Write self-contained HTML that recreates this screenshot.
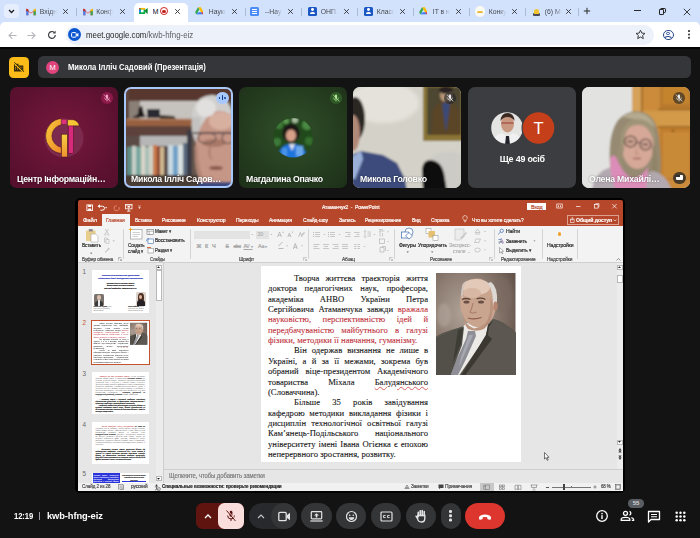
<!DOCTYPE html>
<html><head><meta charset="utf-8">
<style>
*{box-sizing:border-box;margin:0;padding:0}
html,body{width:700px;height:538px;overflow:hidden;background:#131314;font-family:"Liberation Sans",sans-serif}
body{position:relative}
.a{position:absolute;white-space:nowrap}
.tab{position:absolute;top:0;height:22px;width:56px;font-size:6.800px;color:#45484d;line-height:23.400px;white-space:nowrap}
.tab .t{position:absolute;left:18.800px;top:0;width:17px;overflow:hidden;-webkit-mask-image:linear-gradient(90deg,#000 60%,transparent)}
.tab .x{position:absolute;left:41px;top:7.5px;width:7px;height:7px}
.tab .sep{position:absolute;right:0.500px;top:7.500px;width:1px;height:8px;background:#adbad3}
.fav{position:absolute;left:5px;top:6px;width:10px;height:10px}
.tile{position:absolute;top:87px;width:108px;height:101.200px;border-radius:7px;overflow:hidden}
.tile>svg:first-child{position:absolute;left:0;top:0}
.name{position:absolute;left:6.500px;top:85.500px;font-size:9px;line-height:12px;color:#fff;font-weight:bold;white-space:nowrap;letter-spacing:-0.25px;text-shadow:0 0 2px rgba(0,0,0,.5)}
.mic{position:absolute;right:5.300px;top:5.100px;width:11.600px;height:11.600px;border-radius:50%;background:rgba(32,33,36,.6)}
.btn{position:absolute;top:503px;height:26px;background:#333537;border-radius:13px}
.pt{position:absolute;white-space:nowrap;font-size:5.3px;line-height:7px;color:#262626;letter-spacing:-0.1px;-webkit-text-stroke:0.18px currentColor}
.rt{position:absolute;white-space:nowrap;font-size:5.3px;line-height:7px;color:#fff;letter-spacing:-0.1px;-webkit-text-stroke:0.18px #fff}
.vs{position:absolute;top:229px;width:1px;height:30px;background:#d4d4d4}
.sx{display:inline-block;transform:scaleX(var(--k,1));transform-origin:0 0}
.tt{position:absolute;font-family:"Liberation Serif",serif;font-size:1.720px;line-height:2.050px;white-space:normal}
.tt b,.tt[style*="bold"]{-webkit-text-stroke:0.100px currentColor}
.j{text-align:justify}
.sl{position:absolute;left:0;top:0;width:260px;height:195px;font-family:"Liberation Serif",serif;font-size:8.650px;line-height:10.380px;color:#141414;-webkit-text-stroke:0.100px currentColor}
.sl .ln{position:relative;left:7px;width:160px;height:10.38px;text-align:justify;text-align-last:justify;white-space:nowrap}
.sl .ln:first-child{margin-top:6.4px}
.sl .in{padding-left:26px}
.sl .la{text-align-last:left}
.rd{color:#c0323c}
.wv{text-decoration:underline wavy #d86060 0.350px;text-underline-offset:0.800px}
.ph{position:absolute;left:175.4px;top:6.6px}
</style></head><body>

<div class="a" style="left:0;top:0;width:700px;height:30px;background:#d3e2fc"></div>
<div class="a" style="left:0;top:22px;width:700px;height:25.300px;background:#fff;border-radius:5px 5px 0 0"></div><div class="a" style="left:0;top:47.300px;width:700px;height:1.700px;background:#050505"></div>
<div class="a" style="left:3.5px;top:4px;width:15.5px;height:14px;border-radius:4px;background:#e6eefd"></div>
<svg class="a" style="left:8px;top:9px" width="7" height="5" viewBox="0 0 7 5"><path d="M1 1 L3.5 3.5 L6 1" fill="none" stroke="#1f1f1f" stroke-width="1.3"/></svg>
<svg width="0" height="0" style="position:absolute"><defs>
<symbol id="gm" viewBox="0 0 10 8"><path d="M0.3 7.3V1.2L5 4.8L9.7 1.2V7.3H7.6V3.6L5 5.6L2.4 3.6V7.3Z" fill="#ea4335"/><rect x="0.3" y="2" width="2.1" height="5.3" fill="#4285f4"/><rect x="7.6" y="2" width="2.1" height="5.3" fill="#34a853"/><path d="M7.6 1.6L9.7 0.4V3L7.6 3.6Z" fill="#fbbc04"/><path d="M0.3 0.4L2.4 1.6V3.6L0.3 3Z" fill="#c5221f"/></symbol>
<symbol id="cx" viewBox="0 0 7 7"><path d="M1.200 1.200L5.800 5.800M5.800 1.200L1.200 5.800" stroke="#33363a" stroke-width="0.950" fill="none"/></symbol>
<symbol id="drv" viewBox="0 0 10 9"><path d="M3.4 0.3H6.6L10 6H6.8Z" fill="#fbbc04"/><path d="M3.4 0.3L0 6L1.6 8.7L5 3Z" fill="#34a853"/><path d="M1.6 8.7H8.4L10 6H3.2Z" fill="#4285f4"/><path d="M6.8 6H10L8.4 8.7Z" fill="#ea4335"/></symbol>
</defs></svg>
<div class="tab" style="left:21px"><svg class="fav" style="top:7.5px;height:8px"><use href="#gm"/></svg><span class="t">Вхідні</span><svg class="x"><use href="#cx"/></svg><div class="sep"></div></div>
<div class="tab" style="left:77.5px"><svg class="fav" style="top:7.5px;height:8px"><use href="#gm"/></svg><span class="t">Конфе</span><svg class="x"><use href="#cx"/></svg></div>
<div class="a" style="left:134px;top:2.5px;width:53.5px;height:20px;background:#fff;border-radius:5px 5px 0 0"></div>
<div class="tab" style="left:133px"><svg class="fav" style="left:6px;top:7.300px;width:8.800px;height:8px" viewBox="0 0 10 9"><rect x="0" y="1" width="7" height="7" rx="1" fill="#00ac47"/><path d="M0 3L2.2 1H0Z" fill="#ea4335"/><rect x="0" y="3" width="2" height="3" fill="#2684fc"/><rect x="2" y="1" width="5" height="2" fill="#ffba00"/><rect x="2.2" y="3" width="3" height="3" fill="#fff"/><path d="M7 3.3L9.8 1.2V7.8L7 5.7Z" fill="#00832d"/></svg><span class="t" style="left:19.600px;width:10px;color:#111;font-size:7.200px;-webkit-mask-image:none">М</span><div class="a" style="left:27.200px;top:7.400px;width:7.800px;height:7.800px;border-radius:50%;border:1px solid #c5221f"></div><div class="a" style="left:29.400px;top:9.600px;width:3.400px;height:3.400px;border-radius:50%;background:#c5221f"></div><svg class="x" style="left:41px"><use href="#cx"/></svg></div>
<div class="tab" style="left:190px"><svg class="fav" style="left:4.600px;top:7.300px;width:8.800px;height:7.800px"><use href="#drv"/></svg><span class="t">Науко</span><svg class="x"><use href="#cx"/></svg><div class="sep"></div></div>
<div class="tab" style="left:246px"><div class="fav" style="left:4px;top:6.500px;width:9px;height:9.400px;border-radius:1.500px;background:#4c8bf5"></div><div class="a" style="left:6px;top:8.700px;width:5px;height:1.100px;background:#fff;box-shadow:0 2px #fff,0 4px #fff"></div><span class="t">--Науко</span><svg class="x"><use href="#cx"/></svg><div class="sep"></div></div>
<div class="tab" style="left:302px"><div class="fav" style="left:5.5px;top:6.5px;width:9.5px;height:9.5px;border-radius:1.5px;background:#1a56c4"></div><div class="a" style="left:8.8px;top:8.3px;width:2.8px;height:2.8px;border-radius:50%;background:#fff"></div><div class="a" style="left:7.6px;top:11.8px;width:5.3px;height:2.5px;border-radius:2px 2px 0 0;background:#fff"></div><span class="t">ОНП..</span><svg class="x"><use href="#cx"/></svg><div class="sep"></div></div>
<div class="tab" style="left:358px"><div class="fav" style="left:5.5px;top:6.5px;width:9.5px;height:9.5px;border-radius:1.5px;background:#1a56c4"></div><div class="a" style="left:8.8px;top:8.3px;width:2.8px;height:2.8px;border-radius:50%;background:#fff"></div><div class="a" style="left:7.6px;top:11.8px;width:5.3px;height:2.5px;border-radius:2px 2px 0 0;background:#fff"></div><span class="t">Класні</span><svg class="x"><use href="#cx"/></svg><div class="sep"></div></div>
<div class="tab" style="left:414px"><svg class="fav" style="left:4.600px;top:7.300px;width:8.800px;height:7.800px"><use href="#drv"/></svg><span class="t">IT в на</span><svg class="x"><use href="#cx"/></svg><div class="sep"></div></div>
<div class="tab" style="left:470px"><div class="fav" style="left:4.5px;top:6px;width:10.5px;height:10.5px;border-radius:50%;background:#fbfaf2"></div><div class="a" style="left:6.5px;top:10.5px;width:6.5px;height:2px;border-radius:2px 2px 0 0;background:#e9b83c"></div><span class="t">Конку</span><svg class="x"><use href="#cx"/></svg><div class="sep"></div></div>
<div class="tab" style="left:526px"><div class="a" style="left:6.5px;top:13px;width:7px;height:2.6px;border-radius:1px;background:#4a4a58"></div><div class="a" style="left:7.5px;top:8.5px;width:5px;height:5px;border-radius:2.5px 2.5px 0 0;background:#f0c430"></div><span class="t">(6) Ме</span><svg class="x" style="left:39px"><use href="#cx"/></svg><div class="sep" style="right:3.500px"></div></div>
<svg class="a" style="left:583px;top:7px" width="8" height="8" viewBox="0 0 8 8"><path d="M4 0.800V7.200M0.800 4H7.200" stroke="#2a2a2a" stroke-width="1"/></svg>
<div class="a" style="left:634px;top:10.300px;width:6.500px;height:0.900px;background:#2a2a2a"></div>
<div class="a" style="left:658.5px;top:9px;width:5.5px;height:5.5px;border:1px solid #1f1f1f;border-radius:1.2px;background:#d3e2fc"></div>
<div class="a" style="left:660px;top:7.5px;width:5.5px;height:5.5px;border:1px solid #1f1f1f;border-radius:1.2px;z-index:-0"></div>
<div class="a" style="left:658.5px;top:9px;width:5.5px;height:5.5px;border:1px solid #1f1f1f;border-radius:1.2px;background:#d3e2fc"></div>
<svg class="a" style="left:683px;top:7.5px" width="8" height="8" viewBox="0 0 8 8"><path d="M0.800 0.800L7.200 7.200M7.200 0.800L0.800 7.200" stroke="#2a2a2a" stroke-width="0.900"/></svg>
<!-- toolbar -->
<svg class="a" style="left:8px;top:30.5px" width="9" height="9" viewBox="0 0 9 9"><path d="M8.5 4.5H1.2M4.3 1.2L1 4.5L4.3 7.8" fill="none" stroke="#b4b6ba" stroke-width="1.1"/></svg>
<svg class="a" style="left:27px;top:30.5px" width="9" height="9" viewBox="0 0 9 9"><path d="M0.5 4.5H7.8M4.7 1.2L8 4.5L4.7 7.8" fill="none" stroke="#b4b6ba" stroke-width="1.1"/></svg>
<svg class="a" style="left:47px;top:30px" width="10" height="10" viewBox="0 0 10 10"><path d="M8.3 5A3.4 3.4 0 1 1 7.3 2.5" fill="none" stroke="#3c4043" stroke-width="1.2"/><path d="M8.6 0.8V3.6H5.8Z" fill="#3c4043"/></svg>
<div class="a" style="left:66px;top:25px;width:587.500px;height:19.500px;border-radius:10px;background:#edf1fa"></div>
<div class="a" style="left:67.5px;top:28.3px;width:13px;height:13px;border-radius:50%;background:#0b57d0"></div>
<svg class="a" style="left:70.5px;top:32px" width="8" height="6" viewBox="0 0 8 6"><rect x="0.6" y="0.6" width="4.6" height="4.6" rx="0.9" fill="none" stroke="#fff" stroke-width="1"/><path d="M5.4 2.2L7.4 1V4.8L5.4 3.6Z" fill="#fff"/></svg>
<div class="a" style="left:85.700px;top:28px;font-size:9.200px;line-height:14px;color:#1f1f1f"><span class="sx" style="--k:0.857" id="urlt">meet.google.com<span style="color:#5e6166">/kwb-hfng-eiz</span></span></div>
<svg class="a" style="left:635px;top:29px" width="11" height="11" viewBox="0 0 11 11"><path d="M5.5 1.2L6.8 4.1L10 4.4L7.6 6.5L8.3 9.6L5.5 8L2.7 9.6L3.4 6.5L1 4.4L4.2 4.1Z" fill="none" stroke="#3c4043" stroke-width="1"/></svg>
<div class="a" style="left:663px;top:29.5px;width:10.5px;height:10.5px;border:1.2px solid #2a4a8c;border-radius:50%;overflow:hidden"><div class="a" style="left:2.3px;top:1.2px;width:3.4px;height:3.4px;border-radius:50%;border:1px solid #2a4a8c"></div><div class="a" style="left:0.2px;top:5.6px;width:7.6px;height:6px;border-radius:50%;border:1px solid #2a4a8c"></div></div>
<div class="a" style="left:688.3px;top:30.3px;width:1.7px;height:1.7px;border-radius:50%;background:#3c4043;box-shadow:0 3.4px #3c4043,0 6.8px #3c4043"></div>

<div class="a" style="left:9.100px;top:56.600px;width:19.500px;height:21.700px;border-radius:4.500px;background:#fbbc1a"></div>
<svg class="a" style="left:13.200px;top:61.800px" width="11.500" height="10.500" viewBox="0 0 11.500 10.500"><path d="M1 1.800H5.500V3.600H10.300V9.500H1Z" fill="#33280c"/><path d="M2 3.500H3M2 5.300H3M2 7.100H3M4 5.300H5M4 7.100H5M6.500 5.300H7.600M6.500 7.100H7.600M8.500 5.300H9.300" stroke="#fbbc1a" stroke-width="0.800"/><path d="M0.500 0.300L10.800 10.300" stroke="#fbbc1a" stroke-width="1.600"/><path d="M1.200 0.300L11.300 10.100" stroke="#33280c" stroke-width="0.900"/></svg>
<div class="a" style="left:37.700px;top:56.300px;width:653px;height:22px;border-radius:5.500px;background:#35363a"></div>
<div class="a" style="left:46px;top:61.100px;width:13.200px;height:13.200px;border-radius:50%;background:#e0447c;color:#fff;font-size:7.500px;text-align:center;line-height:13.400px">M</div>
<div class="a" style="left:68.200px;top:61px;line-height:13px;font-size:9px;font-weight:bold;color:#fff"><span class="sx" style="--k:0.848" id="pres">Микола Ілліч Садовий (Презентація)</span></div>

<svg width="0" height="0" style="position:absolute"><defs>
<filter id="b1" x="-10%" y="-10%" width="120%" height="120%"><feGaussianBlur stdDeviation="0.9"/></filter>
<filter id="b2" x="-10%" y="-10%" width="120%" height="120%"><feGaussianBlur stdDeviation="1.6"/></filter>
<filter id="b3" x="-10%" y="-10%" width="120%" height="120%"><feGaussianBlur stdDeviation="0.5"/></filter>
<symbol id="micoff" viewBox="0 0 12 12"><rect x="4.900" y="2.600" width="2.200" height="4.200" rx="1.100" fill="currentColor"/><path d="M3.600 5.600A2.400 2.400 0 0 0 8.400 5.600M6 8V9.400" fill="none" stroke="currentColor" stroke-width="0.700"/><path d="M3 2.600L9.200 9.400" stroke="currentColor" stroke-width="0.800"/></symbol>
</defs></svg>
<!-- tile1 -->
<div class="tile" style="left:10px;background:radial-gradient(ellipse 75% 75% at 50% 45%,#78193d,#5c1130 70%,#530f2b)">
 <svg width="108" height="102" viewBox="0 0 108 102">
  <defs><linearGradient id="lg1" x1="0" y1="0" x2="1" y2="1"><stop offset="0" stop-color="#f8cc38"/><stop offset="1" stop-color="#f0882c"/></linearGradient><linearGradient id="lg2" x1="0" y1="0" x2="0" y2="1"><stop offset="0" stop-color="#f8d040"/><stop offset="1" stop-color="#f09030"/></linearGradient></defs>
  <circle cx="54.100" cy="51.100" r="19.500" fill="#7c2a4e"/>
  <g filter="url(#b3)">
  <path d="M51.300 31.500A17.600 17.600 0 0 0 51.300 66.500V60.300A11.500 11.500 0 0 1 51.300 37.700Z" fill="url(#lg1)" stroke="#3a0a1c" stroke-width="0.500"/>
  <rect x="51.600" y="32.700" width="4.800" height="4.200" fill="#e0307c"/>
  <rect x="51.400" y="47.200" width="6" height="22.800" fill="url(#lg2)" stroke="#3a0a1c" stroke-width="0.500"/>
  <rect x="58.200" y="37.700" width="5.400" height="29" fill="#d82a7a" stroke="#3a0a1c" stroke-width="0.500"/>
  <path d="M57.600 32.700H63Q68 33.500 69.300 38.800H57.600Z" fill="#f6c634" stroke="#3a0a1c" stroke-width="0.400"/>
  </g>
 </svg>
 <div class="mic" style="background:#8b1a4a"></div><svg class="a" style="right:5.100px;top:4.900px;color:#f4a6c6" width="12" height="12"><use href="#micoff"/></svg>
 <div class="name" id="n1"><span class="sx" style="--k:.97">Центр Інформаційн…</span></div>
</div>
<!-- tile2 -->
<div class="tile" style="left:124.200px;width:108.600px;background:#8a8078">
 <svg width="108" height="102" viewBox="0 0 108 102">
  <g filter="url(#b1)">
  <rect x="-2" y="-2" width="112" height="106" fill="#66564e"/>
  <rect x="-2" y="-2" width="112" height="16" fill="#58382e"/>
  <rect x="5" y="14" width="11" height="18" fill="#8a8078"/>
  <rect x="16" y="14" width="58" height="18" fill="#c6c2be"/>
  <rect x="0" y="0" width="5" height="102" fill="#5e443a"/>
  <path d="M8 31L14 27L15 20L18 19L20 27L22 30Z" fill="#1c1816"/>
  <rect x="23" y="22" width="13" height="9" fill="#2a2a30"/>
  <path d="M36 28L50 29L52 32H36Z" fill="#3a302c"/>
  <rect x="2" y="31.700" width="66" height="2" fill="#b07a5a"/>
  <rect x="2" y="33.500" width="66" height="5.500" fill="#98603f"/>
  <rect x="2" y="39" width="66" height="10" fill="#5c433a"/>
  <rect x="16" y="49" width="50" height="10" fill="#b6b6b6"/>
  <rect x="2" y="49" width="14" height="10" fill="#5a4c46"/>
  <rect x="3" y="60" width="5" height="28" fill="#5e9088"/>
  <rect x="8" y="59" width="4" height="29" fill="#c8d0c8"/>
  <rect x="12" y="60" width="5" height="28" fill="#78a8a0"/>
  <rect x="17" y="59" width="4" height="29" fill="#d8d4c8"/>
  <rect x="21" y="60" width="4" height="28" fill="#a8c0b8"/>
  <rect x="25" y="59" width="4" height="29" fill="#d0d0c4"/>
  <rect x="29" y="58" width="4" height="30" fill="#c87848"/>
  <rect x="33" y="59" width="3" height="29" fill="#8a4030"/>
  <rect x="36" y="60" width="4" height="28" fill="#d0b890"/>
  <rect x="40" y="59" width="4" height="29" fill="#584a48"/>
  <rect x="44" y="58" width="5" height="30" fill="#c8d8e0"/>
  <rect x="49" y="59" width="5" height="29" fill="#70a0c8"/>
  <rect x="54" y="58" width="5" height="30" fill="#d8e0e0"/>
  <rect x="59" y="56" width="4" height="32" fill="#5a6a80"/>
  <rect x="63" y="43" width="5" height="45" fill="#3a3a44"/>
  <rect x="0" y="88" width="76" height="16" fill="#4a3c36"/>
  <ellipse cx="88" cy="28" rx="20" ry="20" fill="#d0cecc"/>
  <path d="M68 30Q66 44 72 56L78 50L76 30Z" fill="#c4c2c0"/>
  <ellipse cx="96" cy="68" rx="25" ry="44" fill="#c69686"/>
  <ellipse cx="97" cy="34" rx="12" ry="9" fill="#d8b0a0"/>
  <ellipse cx="82" cy="21" rx="10" ry="9" fill="#e2e0de"/>
  <ellipse cx="90" cy="56" rx="12" ry="4" fill="#a87868"/>
  <path d="M69 46H108" stroke="#4a4040" stroke-width="1.300"/>
  <ellipse cx="83" cy="51" rx="9" ry="5.500" fill="none" stroke="#5a4a4a" stroke-width="1.100"/>
  <ellipse cx="104" cy="51" rx="6" ry="5.500" fill="none" stroke="#5a4a4a" stroke-width="1.100"/>
  <path d="M86 60Q84 70 88 72" stroke="#a87868" stroke-width="1.500" fill="none"/>
  <ellipse cx="92" cy="81" rx="7" ry="2" fill="#8a5850"/>
  <path d="M72 60Q72 84 82 100" stroke="#b08474" stroke-width="3" fill="none"/>
  <path d="M72 104L76 95L108 95V104Z" fill="#3a4a80"/>
  </g>
 </svg>
 <div class="a" style="left:0;top:0;width:108.600px;height:101.200px;border:2px solid #a8c7fa;border-radius:7px"></div>
 <div class="a" style="right:4px;top:4.5px;width:12.5px;height:12.5px;border-radius:50%;background:#a8c7fa"></div>
 <div class="a" style="right:9.5px;top:8.3px;width:1.6px;height:5px;border-radius:1px;background:#0b3a8c"></div>
 <div class="a" style="right:12.3px;top:9.6px;width:1.5px;height:2.4px;border-radius:1px;background:#0b3a8c"></div>
 <div class="a" style="right:6.8px;top:9.6px;width:1.5px;height:2.4px;border-radius:1px;background:#0b3a8c"></div>
 <div class="name" id="n2"><span class="sx" style="--k:.97">Микола Ілліч Садов…</span></div>
</div>
<!-- tile3 -->
<div class="tile" style="left:239px;background:radial-gradient(ellipse 80% 80% at 50% 45%,#30502a,#23391d 65%,#1b2d17)">
 <svg width="108" height="102" viewBox="0 0 108 102">
  <defs><clipPath id="c3"><circle cx="54.3" cy="50.8" r="19.8"/></clipPath></defs>
  <g clip-path="url(#c3)"><g filter="url(#b1)">
   <rect x="30" y="28" width="50" height="46" fill="#24481f"/>
   <circle cx="40" cy="38" r="4" fill="#3e7a38"/><circle cx="68" cy="38" r="5" fill="#4a8a42"/><circle cx="70" cy="54" r="4" fill="#34702f"/><circle cx="38" cy="55" r="4" fill="#3e7a3a"/><circle cx="56" cy="33" r="3" fill="#a8c0a0"/><circle cx="47" cy="34" r="3" fill="#5a9a50"/>
   <ellipse cx="52" cy="46" rx="8.500" ry="9.500" fill="#1c1416"/>
   <ellipse cx="52" cy="48.500" rx="5" ry="6" fill="#d8a088"/>
   <path d="M39 72C40 60 46 57 53 57S66 60 69 72Z" fill="#1a74dc"/>
   <path d="M50 57L53 64L56 57Z" fill="#e0e4f0"/>
   <rect x="57" y="59" width="7" height="10" fill="#6aa8ec"/><rect x="43" y="61" width="5" height="8" fill="#4a94e8"/>
  </g></g>
 </svg>
 <div class="mic" style="background:#2f5a26"></div><svg class="a" style="right:5.100px;top:4.900px;color:#b4e89a" width="12" height="12"><use href="#micoff"/></svg>
 <div class="name" id="n3"><span class="sx" style="--k:.97">Магдалина Опачко</span></div>
</div>
<!-- tile4 -->
<div class="tile" style="left:353px;background:#d6d4ca">
 <svg width="108" height="102" viewBox="0 0 108 102">
  <g filter="url(#b1)">
  <rect x="-2" y="-2" width="112" height="106" fill="#d4d2c8"/>
  <g filter="url(#b2)"><ellipse cx="30" cy="16" rx="36" ry="20" fill="#e4e2da"/>
  <ellipse cx="96" cy="86" rx="26" ry="22" fill="#cccbc6"/></g>
  <rect x="70" y="-2" width="40" height="56" fill="#8a7434"/>
  <rect x="74" y="0" width="34" height="48" fill="#4e4632"/>
  <ellipse cx="93" cy="8" rx="6" ry="7" fill="#b89878"/>
  <ellipse cx="93" cy="3" rx="7" ry="4" fill="#2a2420"/>
  <path d="M78 48L80 22L88 14L98 14L106 22L108 48Z" fill="#5a4428"/>
  <path d="M89 16L93 46L97 16Z" fill="#3a4a78"/>
  <ellipse cx="2" cy="32" rx="10" ry="22" fill="#2c2622"/>
  <ellipse cx="0" cy="46" rx="7" ry="18" fill="#b08878"/>
  <path d="M-2 68L8 64L30 68L44 76L52 92L54 104L-2 104Z" fill="#3c4c7c"/>
  <path d="M-2 70L8 64L10 72L2 92L-2 92Z" fill="#9ab0d8"/>
  <path d="M70 104L69 82Q70 73 78 73Q88 74 91 86L94 104Z" fill="#101010"/>
  </g>
 </svg>
 <div class="mic"></div><svg class="a" style="right:5.100px;top:4.900px;color:#e8eaed" width="12" height="12"><use href="#micoff"/></svg>
 <div class="name" id="n4"><span class="sx" style="--k:.97">Микола Головко</span></div>
</div>
<!-- tile5 -->
<div class="tile" style="left:468px;background:#3c3d40">
 <svg width="108" height="102" viewBox="0 0 108 102">
  <defs><clipPath id="c5"><circle cx="39" cy="41" r="15.8"/></clipPath></defs>
  <g clip-path="url(#c5)"><g filter="url(#b3)">
   <rect x="20" y="22" width="40" height="40" fill="#e4e4e2"/>
   <ellipse cx="39.5" cy="37" rx="6.5" ry="8.5" fill="#c89880"/>
   <path d="M32.5 34Q33 26 39.5 26Q46 26 46.500 34Q44 30 39.5 30Q35 30 32.5 34Z" fill="#3a2a24"/>
   <path d="M33.500 36H45.500" stroke="#b06858" stroke-width="2"/>
   <path d="M24 58Q26 47 34 46L39.500 50L45 46Q53 47 55 58Z" fill="#f0f0f2"/>
   <path d="M38 49H41L42 58H37Z" fill="#20242c"/>
  </g></g>
  <circle cx="70.500" cy="41" r="16.400" fill="#c5401a" stroke="#3c3d40" stroke-width="1.200"/>
 </svg>
 <div class="a" style="left:55px;top:31px;width:31px;text-align:center;color:#fff;font-size:16.500px;line-height:20px">T</div>
 <div class="a" id="n5" style="left:0;width:108px;top:66px;text-align:center;font-size:9.2px;line-height:12px;font-weight:bold;color:#fff;letter-spacing:-0.2px"><span class="sx" style="--k:.97;transform-origin:50% 0">Ще 49 осіб</span></div>
</div>
<!-- tile6 -->
<div class="tile" style="left:582px;background:#d8d8d6">
 <svg width="108" height="102" viewBox="0 0 108 102">
  <g filter="url(#b1)">
  <rect x="-2" y="-2" width="112" height="106" fill="#e2e2e0"/>
  
  <rect x="50" y="-2" width="60" height="106" fill="#cb8b3b"/>
  <rect x="50" y="-2" width="9.500" height="106" fill="#d6a25a"/>
  <rect x="59" y="-2" width="1.600" height="106" fill="#9c6424"/>
  <rect x="78" y="-2" width="32" height="23.500" fill="#b9792d"/>
  <rect x="81" y="-2" width="26" height="19" fill="#c4842f"/>
  <rect x="76" y="21.500" width="34" height="2" fill="#a06822"/>
  <rect x="60.600" y="23.500" width="50" height="15.500" fill="#d29a4a"/>
  <rect x="76" y="39" width="34" height="2" fill="#a86e26"/>
  <rect x="78" y="41" width="32" height="52" fill="#c07e2e"/>
  <rect x="81" y="45" width="26" height="46" fill="#c98a38"/>
  <circle cx="91" cy="44" r="1.300" fill="#8a5418"/>
  <path d="M29 88Q24 50 36 33Q46 22 60 25Q75 29 77 52Q80 74 78 90L56 96Z" fill="#968a72"/>
  <path d="M40 30Q50 23 62 27Q70 31 73 40L58 33Z" fill="#b4aa90"/>
  <ellipse cx="55.500" cy="58" rx="16" ry="24" fill="#d6a898"/>
  <path d="M39 62Q36 40 50 33Q62 30 70 38Q74 46 73 60Q70 44 62 39Q52 36 46 42Q41 50 42 64Z" fill="#a09478"/>
  <path d="M36 60Q34 74 33 86L41 84Q40 70 42 60Z" fill="#9a8e74"/>
  <path d="M72 58Q76 72 76 88L69 84Q72 72 70 60Z" fill="#908468"/>
  <ellipse cx="48.500" cy="54.500" rx="6" ry="5.500" fill="#cca292" stroke="#4a3a34" stroke-width="1.200"/>
  <ellipse cx="63.500" cy="57.500" rx="5.500" ry="5.500" fill="#cca292" stroke="#4a3a34" stroke-width="1.200"/>
  <path d="M54.500 55.500H58" stroke="#4a3a34" stroke-width="1"/>
  <path d="M45.500 54.500H51M60.500 57.500H66" stroke="#5a4840" stroke-width="1.300"/>
  <path d="M51 71.500H59" stroke="#a0605c" stroke-width="1.500"/>
  <path d="M55 61L53.500 67H57" stroke="#b88878" stroke-width="1" fill="none"/>
  <path d="M10 104Q12 84 30 80L44 100L70 84Q84 86 90 104Z" fill="#b2a9b0"/>
  <path d="M28 72Q30 66 34 70Q40 86 50 92Q60 90 66 80L64 104H34Q28 90 28 72Z" fill="#dc8cb8"/>
  </g>
 </svg>
 <div class="mic"></div><svg class="a" style="right:5.100px;top:4.900px;color:#e8eaed" width="12" height="12"><use href="#micoff"/></svg>
 <div class="a" style="right:4.500px;top:84.500px;width:12.500px;height:12.500px;border-radius:50%;background:rgba(32,33,36,.75)"></div>
 <div class="a" style="right:7.200px;top:87.800px;width:7px;height:5.500px;border-radius:1px;background:#fff"></div>
 <div class="a" style="right:10.500px;top:87.500px;width:4px;height:2.500px;background:#303134"></div>
 <div class="name" id="n6"><span class="sx" style="--k:.97">Олена Михайлі…</span></div>
</div>

<!-- PowerPoint window -->
<div class="a" style="left:74.800px;top:197.800px;width:550px;height:295.200px;border-radius:5px;background:#000"></div>
<div class="a" style="left:77.700px;top:200px;width:545.300px;height:26px;background:#b7472a;border-radius:2px 2px 0 0"></div>
<div class="a" style="left:77.700px;top:225.500px;width:545.300px;height:37px;background:#f3f3f3"></div>
<div class="a" style="left:77.700px;top:262px;width:545.300px;height:221px;background:#e6e6e6"></div>
<div class="a" style="left:77.700px;top:262px;width:545.300px;height:1px;background:#d0d0d0"></div>
<div class="a" style="left:77.700px;top:482.500px;width:545.300px;height:8.500px;background:#f1f1f1"></div>
<!-- QAT -->
<svg class="a" style="left:86px;top:203.500px" width="60" height="8" viewBox="0 0 60 8">
 <rect x="0.900" y="0.900" width="5.600" height="5.600" fill="none" stroke="#fff" stroke-width="0.900"/><rect x="2.200" y="1" width="3" height="2" fill="#fff"/><rect x="2.200" y="4.500" width="3" height="2" fill="#fff"/>
 <path d="M13 2.200H16.500A2 2 0 0 1 16.500 6.200H14.500" fill="none" stroke="#fff" stroke-width="1"/><path d="M11.500 2.200L14 0.300V4.100Z" fill="#fff"/>
 <path d="M19 3.200L20.200 4.400L21.400 3.200Z" fill="#fff"/>
 <path d="M30.700 1.600A2.600 2.600 0 1 0 33 3" fill="none" stroke="#e08a74" stroke-width="0.900"/>
 <g transform="translate(2.500,0)"><rect x="37" y="0.800" width="6.500" height="4" fill="none" stroke="#fff" stroke-width="0.800"/><path d="M36.500 0.800H44M40.200 4.800V7M38.500 7.200H42" stroke="#fff" stroke-width="0.800"/><rect x="39" y="2" width="2.500" height="1.600" fill="#fff"/></g>
 <path d="M52.300 2H54.700M52.800 3.600L53.500 4.500L54.200 3.600Z" stroke="#fff" stroke-width="0.600" fill="#fff"/>
</svg>
<div class="rt" style="left:321.600px;top:203.500px"><span class="sx" style="--k:0.939" id="ptitle">Атаманчук2 &nbsp;-&nbsp; PowerPoint</span></div>
<div class="a" style="left:526.500px;top:203.300px;width:19.500px;height:7.200px;background:#fff"></div>
<div class="pt" style="left:531px;top:203.500px;color:#b7472a">Вход</div>
<svg class="a" style="left:555.500px;top:202.700px" width="62" height="7" viewBox="0 0 62 7">
 <rect x="0.800" y="1" width="5.400" height="4" fill="none" stroke="#fff" stroke-width="0.700"/><path d="M2.500 2.400V4M4.500 2.400V4" stroke="#fff" stroke-width="0.800"/>
 <path d="M20 3.500H24.500" stroke="#fff" stroke-width="0.700"/>
 <rect x="38.500" y="1.500" width="3.600" height="3.600" fill="none" stroke="#fff" stroke-width="0.700"/><path d="M39.700 1.500V0.600H43V4H42.100" fill="none" stroke="#fff" stroke-width="0.600"/>
 <path d="M56.300 1L60.700 5.400M60.700 1L56.300 5.400" stroke="#fff" stroke-width="0.700"/>
</svg>
<!-- ribbon tabs -->
<div class="a" style="left:102px;top:213.500px;width:27.500px;height:12.500px;background:#f3f3f3"></div>
<div class="rt" style="left:83px;top:216.700px"><span class="sx" style="--k:1.109" id="t0">Файл</span></div>
<div class="pt" style="left:106px;top:216.700px;color:#b7472a"><span class="sx" style="--k:0.955" id="t1">Главная</span></div>
<div class="rt" style="left:135px;top:216.700px"><span class="sx" style="--k:0.884" id="t2">Вставка</span></div>
<div class="rt" style="left:162px;top:216.700px"><span class="sx" style="--k:0.915" id="t3">Рисование</span></div>
<div class="rt" style="left:197px;top:216.700px"><span class="sx" style="--k:0.983" id="t4">Конструктор</span></div>
<div class="rt" style="left:236px;top:216.700px"><span class="sx" style="--k:0.940" id="t5">Переходы</span></div>
<div class="rt" style="left:269px;top:216.700px"><span class="sx" style="--k:0.955" id="t6">Анимация</span></div>
<div class="rt" style="left:302.500px;top:216.700px"><span class="sx" style="--k:0.934" id="t7">Слайд-шоу</span></div>
<div class="rt" style="left:338.500px;top:216.700px"><span class="sx" style="--k:0.989" id="t8">Запись</span></div>
<div class="rt" style="left:365px;top:216.700px"><span class="sx" style="--k:0.911" id="t9">Рецензирование</span></div>
<div class="rt" style="left:412px;top:216.700px"><span class="sx" style="--k:0.925" id="t10">Вид</span></div>
<div class="rt" style="left:431px;top:216.700px"><span class="sx" style="--k:0.916" id="t11">Справка</span></div>
<svg class="a" style="left:461.500px;top:215px" width="6" height="8" viewBox="0 0 6 8"><path d="M3 0.600A2.100 2.100 0 0 1 4.200 4.500V5.600H1.800V4.500A2.100 2.100 0 0 1 3 0.600ZM2 6.700H4" fill="none" stroke="#fff" stroke-width="0.600"/></svg>
<div class="rt" style="left:471.500px;top:216.700px"><span class="sx" style="--k:0.916" id="t12">Что вы хотите сделать?</span></div>
<div class="a" style="left:566.500px;top:215px;width:52px;height:9.500px;border:0.800px solid #dca090"></div>
<svg class="a" style="left:569.500px;top:217px" width="5" height="6" viewBox="0 0 5 6"><rect x="0.500" y="2.200" width="3.600" height="3.200" fill="none" stroke="#fff" stroke-width="0.600"/><path d="M2.300 3.500V0.600M1.300 1.500L2.300 0.500L3.300 1.500" stroke="#fff" stroke-width="0.600" fill="none"/></svg>
<div class="rt" style="left:576px;top:216.700px;font-weight:bold;font-size:5.600px"><span class="sx" style="--k:0.920" id="t13">Общий доступ</span></div>
<svg class="a" style="left:613.300px;top:218.500px" width="4" height="3" viewBox="0 0 4 3"><path d="M0.500 0.500L2 2L3.500 0.500" stroke="#fff" stroke-width="0.600" fill="none"/></svg>
<!-- ribbon body -->
<div class="vs" style="left:123.400px"></div><div class="vs" style="left:190px"></div><div class="vs" style="left:308px"></div><div class="vs" style="left:394.400px"></div><div class="vs" style="left:493.600px"></div><div class="vs" style="left:542.400px"></div><div class="vs" style="left:577.400px"></div>
<!-- g1 -->
<svg class="a" style="left:85px;top:228px" width="30" height="26" viewBox="0 0 30 26">
 <rect x="1" y="2.500" width="9.500" height="10.500" rx="0.800" fill="#e9cd8c"/><rect x="3.800" y="1" width="4" height="2.600" rx="0.600" fill="#8a8a8a"/>
 <path d="M6 6H10.500L13 8.500V14H6Z" fill="#fff" stroke="#9a9a9a" stroke-width="0.500"/>
 <path d="M20 1L23.500 6M23.500 1L20 6" stroke="#b8b8b8" stroke-width="0.700"/><circle cx="20.300" cy="6.600" r="0.800" fill="none" stroke="#b8b8b8" stroke-width="0.500"/><circle cx="23.200" cy="6.600" r="0.800" fill="none" stroke="#b8b8b8" stroke-width="0.500"/>
 <rect x="19.500" y="10" width="3" height="4" fill="none" stroke="#b8b8b8" stroke-width="0.600"/><rect x="21" y="11.500" width="3" height="4" fill="#f3f3f3" stroke="#b8b8b8" stroke-width="0.600"/>
 <path d="M27.500 12.500L28.700 13.700L29.900 12.500Z" fill="#b0b0b0"/>
 <path d="M19.800 24L23.200 20.500L24 21.300L20.600 24.800Z" fill="#c4c4c4"/><path d="M23 19.800L24.500 21.300" stroke="#c4c4c4" stroke-width="1.200"/>
 <path d="M5 24.800L6.200 26L7.400 24.800Z" fill="#555"/>
</svg>
<div class="pt" style="left:82px;top:242px"><span class="sx" style="--k:0.877" id="r1">Вставить</span></div>
<div class="pt" style="left:82px;top:255.500px;color:#444"><span class="sx" style="--k:0.891" id="l1">Буфер обмена</span></div>
<svg class="a" style="left:118px;top:257px" width="4" height="4" viewBox="0 0 4 4"><path d="M0.400 3.600V0.400H3.600M1.600 1.600L3.500 3.500M3.600 2V3.600H2" fill="none" stroke="#777" stroke-width="0.500"/></svg>
<!-- g2 -->
<svg class="a" style="left:128px;top:226.500px" width="28" height="30" viewBox="0 0 28 30">
 <rect x="2.500" y="2.500" width="11.500" height="9.500" fill="#fff" stroke="#8a8a8a" stroke-width="0.600"/><path d="M4.500 5.500H12M4.500 7.500H12M4.500 9.500H10" stroke="#b0b0b0" stroke-width="0.600"/><path d="M2.500 0.800V4.200M0.800 2.500H4.200" stroke="#e8a020" stroke-width="0.900"/>
 <rect x="19" y="2.500" width="6.500" height="5" fill="#fff" stroke="#707070" stroke-width="0.600"/><path d="M19 4.200H25.500M21.200 4.200V7.500" stroke="#707070" stroke-width="0.500"/>
 <rect x="20" y="12" width="5.500" height="4.500" fill="#fff" stroke="#3a6ab0" stroke-width="0.600"/><path d="M19 14.500A2 2 0 0 1 21 11.500" fill="none" stroke="#3a6ab0" stroke-width="0.700"/>
 <rect x="20" y="21.500" width="5.500" height="4.500" fill="#fff" stroke="#8a8a8a" stroke-width="0.600"/><path d="M19 20.500H23" stroke="#d06030" stroke-width="0.900"/>
</svg>
<div class="pt" style="left:128px;top:242px"><span class="sx" style="--k:0.854" id="r2">Создать</span></div>
<div class="pt" style="left:128px;top:248px"><span class="sx" style="--k:0.837" id="r3">слайд ▾</span></div>
<div class="pt" style="left:155px;top:228px"><span class="sx" style="--k:0.879" id="r4">Макет ▾</span></div>
<div class="pt" style="left:155px;top:237.200px"><span class="sx" style="--k:0.905" id="r5">Восстановить</span></div>
<div class="pt" style="left:155px;top:246.500px"><span class="sx" style="--k:0.826" id="r6">Раздел ▾</span></div>
<div class="pt" style="left:150px;top:255.500px;color:#444"><span class="sx" style="--k:0.784" id="l2">Слайды</span></div>
<!-- g3 font -->
<div class="a" style="left:193.500px;top:230.500px;width:56.500px;height:8.500px;background:#e3e3e3"></div>
<div class="a" style="left:255.500px;top:230.500px;width:13px;height:8.500px;background:#e3e3e3"></div>
<div class="pt" style="left:257.500px;top:231.300px;color:#b4b4b4">20</div>
<svg class="a" style="left:250px;top:230px" width="60" height="24" viewBox="0 0 60 24">
 <path d="M1.300 4L2.300 5L3.300 4ZM20.300 4L21.300 5L22.300 4Z" fill="#a8a8a8"/>
 <path d="M27.500 7L29.500 2L31.500 7M28.200 5.400H30.800" fill="none" stroke="#a0a0a0" stroke-width="0.600"/><path d="M32 2.500L33 1.500L34 2.500Z" fill="#a0a0a0"/>
 <path d="M37.800 7L39.400 3L41 7M38.400 5.800H40.400" fill="none" stroke="#a0a0a0" stroke-width="0.600"/><path d="M41.500 1.800L42.500 2.800L43.500 1.800Z" fill="#a0a0a0"/>
 <path d="M48.500 7L50.300 2.500L52 7" fill="none" stroke="#a0a0a0" stroke-width="0.600"/><path d="M51 5L54 2L55 3L52 6Z" fill="#c0c0c0"/>
 <path d="M28.500 16L32.500 12M28.500 18.500H33.500" stroke="#a8a8a8" stroke-width="0.800"/><path d="M36 15.500L37 16.500L38 15.500Z" fill="#a8a8a8"/>
 <path d="M43.300 19L45.300 13.500L47.300 19M44 17.200H46.600" fill="none" stroke="#a0a0a0" stroke-width="0.700"/><path d="M51 15.500L52 16.500L53 15.500Z" fill="#a8a8a8"/>
</svg>
<div class="pt" style="left:196.500px;top:243px;color:#a4a4a4;font-weight:bold;letter-spacing:3.700px">ЖКЧ</div>
<div class="pt" style="left:225.500px;top:243px;color:#a4a4a4;text-decoration:line-through">S</div>
<div class="pt" style="left:233.500px;top:243px;color:#a4a4a4;text-decoration:line-through;font-size:4.800px">abc</div>
<div class="pt" style="left:243.500px;top:243px;color:#a4a4a4;text-decoration:underline;font-size:5px">AV<span style="font-size:4px"> ▾</span></div>
<div class="pt" style="left:258px;top:243px;color:#a4a4a4">Aa<span style="font-size:4px"> ▾</span></div>
<div class="pt" style="left:239px;top:255.500px;color:#444"><span class="sx" style="--k:0.886" id="l3">Шрифт</span></div>
<svg class="a" style="left:303px;top:257px" width="4" height="4" viewBox="0 0 4 4"><path d="M0.400 3.600V0.400H3.600M1.600 1.600L3.500 3.500M3.600 2V3.600H2" fill="none" stroke="#999" stroke-width="0.500"/></svg>
<!-- g4 paragraph -->
<svg class="a" style="left:312px;top:228px" width="80" height="28" viewBox="0 0 80 28">
 <g stroke="#b4b4b4" stroke-width="0.700" fill="none">
 <path d="M3 4.500H8M3 6.500H8M3 8.500H8M18 4.500H23M18 6.500H23M18 8.500H23M33 4.500H38.500M35.500 6.500H38.500M33 8.500H38.500M42 4.500H47.500M44.500 6.500H47.500M42 8.500H47.500"/>
 <path d="M1 4.500H2M1 6.500H2M1 8.500H2M16 4.500H17M16 6.500H17M16 8.500H17" stroke-width="0.900"/>
 <path d="M1.500 16.500H7.500M1.500 18.500H5.500M1.500 20.500H7.500M11 16.500H17M12 18.500H16M11 20.500H17M20.500 16.500H26.500M22.500 18.500H26.500M20.500 20.500H26.500M30 16.500H36M30 18.500H36M30 20.500H36M42 16.500H44.500M42 18.500H44.500M42 20.500H44.500M45.500 16.500H48M45.500 18.500H48M45.500 20.500H48"/>
 <path d="M53 2.500V9.500M52 3.500L53 2.500L54 3.500M52 8.500L53 9.500L54 8.500M55.500 4H59M55.500 6H59M55.500 8H59"/>
 <path d="M67 1.500H71M67 3H72.500M68 3V8.500M70.500 5V8.500"/><rect x="67.500" y="11" width="5" height="4.500"/><path d="M68 19.500H72V24H68ZM69.500 18.500H73.500V23"/>
 </g>
 <path d="M11.500 6L12.500 7L13.500 6ZM26.500 6L27.500 7L28.500 6ZM61.500 6L62.500 7L63.500 6ZM75 3.500L76 4.500L77 3.500ZM75 13L76 14L77 13ZM75 22L76 23L77 22ZM51.500 18L52.500 19L53.500 18Z" fill="#b0b0b0"/>
</svg>
<div class="pt" style="left:342px;top:255.500px;color:#444"><span class="sx" style="--k:0.905" id="l4">Абзац</span></div>
<svg class="a" style="left:389px;top:257px" width="4" height="4" viewBox="0 0 4 4"><path d="M0.400 3.600V0.400H3.600M1.600 1.600L3.500 3.500M3.600 2V3.600H2" fill="none" stroke="#999" stroke-width="0.500"/></svg>
<!-- g5 drawing -->
<svg class="a" style="left:398px;top:226px" width="94" height="32" viewBox="0 0 94 32">
 <circle cx="11" cy="6" r="4" fill="#fff" stroke="#3c6cb4" stroke-width="0.700"/><rect x="3.500" y="6" width="7" height="6" fill="#fff" stroke="#3c6cb4" stroke-width="0.700"/><path d="M10 8.500L13.500 12L10 15L6.500 12Z" fill="#fff" stroke="#3c6cb4" stroke-width="0.700" transform="translate(1,-2)"/>
 <rect x="28" y="2.500" width="5" height="5" fill="#fff" stroke="#8a8a8a" stroke-width="0.500"/><rect x="30.500" y="5" width="6.500" height="6.500" fill="#e4c070"/><rect x="35" y="9.500" width="5" height="5" fill="#fff" stroke="#8a8a8a" stroke-width="0.500"/>
 <path d="M57 3H66V11L62 14H57Z" fill="#ececec" stroke="#c0c0c0" stroke-width="0.600"/><path d="M62 12L68 6L69 7L63.500 13Z" fill="#c8c8c8"/>
 <g fill="none" stroke="#b0b0b0" stroke-width="0.600"><path d="M77 6.500L79.500 3L82 6.500ZM77 8H82"/><path d="M76.500 16.500L78 13H82.500L81 16.500Z"/><ellipse cx="79.500" cy="24" rx="2.800" ry="2"/></g>
 <path d="M86 5L87 6L88 5ZM86 14.500L87 15.500L88 14.500ZM86 23.500L87 24.500L88 23.500ZM70 26L71 27L72 26Z" fill="#b0b0b0"/>
 <path d="M8.500 25.500L9.700 26.700L10.900 25.500ZM33 25.500L34.200 26.700L35.400 25.500Z" fill="#555"/>
</svg>
<div class="pt" style="left:399px;top:242px"><span class="sx" style="--k:0.962" id="r7">Фигуры</span></div>
<div class="pt" style="left:418px;top:242px"><span class="sx" style="--k:0.953" id="r8">Упорядочить</span></div>
<div class="pt" style="left:449px;top:242px;color:#b0b0b0"><span class="sx" style="--k:0.926" id="r9">Экспресс-</span></div>
<div class="pt" style="left:452.600px;top:248px;color:#b0b0b0"><span class="sx" style="--k:0.912" id="r10">стили</span></div>
<div class="pt" style="left:430px;top:255.500px;color:#444"><span class="sx" style="--k:0.853" id="l5">Рисование</span></div>
<svg class="a" style="left:488.500px;top:257px" width="4" height="4" viewBox="0 0 4 4"><path d="M0.400 3.600V0.400H3.600M1.600 1.600L3.500 3.500M3.600 2V3.600H2" fill="none" stroke="#999" stroke-width="0.500"/></svg>
<!-- g6 editing -->
<svg class="a" style="left:497px;top:228px" width="40" height="26" viewBox="0 0 40 26">
 <circle cx="4.700" cy="2.800" r="1.700" fill="none" stroke="#3c6cb4" stroke-width="0.700"/><path d="M3.500 4L1.200 6.300" stroke="#3c6cb4" stroke-width="0.800"/>
 <path d="M1.500 11.500H4M1.500 14H5" stroke="#3c6cb4" stroke-width="0.700"/><path d="M4 10L6.500 15" stroke="#8a5ab0" stroke-width="0.700"/><path d="M2 16L4 12.500L6 16" fill="none" stroke="#555" stroke-width="0.500"/>
 <path d="M2.500 19.500V25L4 23.700L5 25.800L5.800 25.400L4.800 23.400L6.500 23.200Z" fill="#fff" stroke="#666" stroke-width="0.500"/>
 <path d="M36.500 12.500L37.500 13.500L38.500 12.500Z" fill="#666"/>
</svg>
<div class="pt" style="left:506px;top:228px"><span class="sx" style="--k:0.957" id="r11">Найти</span></div>
<div class="pt" style="left:506px;top:237.500px"><span class="sx" style="--k:0.912" id="r12">Заменить</span></div>
<div class="pt" style="left:506px;top:246.500px"><span class="sx" style="--k:0.913" id="r13">Выделить ▾</span></div>
<div class="pt" style="left:501px;top:255.500px;color:#444"><span class="sx" style="--k:0.888" id="l6">Редактирование</span></div>
<!-- g7 -->
<div class="a" style="left:557.600px;top:232.200px;width:3.600px;height:3.600px;border-radius:50%;background:#f2a22c"></div>
<div class="pt" style="left:546.600px;top:242px"><span class="sx" style="--k:0.940" id="r14">Надстройки</span></div>
<div class="pt" style="left:547px;top:255.500px;color:#444"><span class="sx" style="--k:0.905" id="l7">Надстройки</span></div>
<svg class="a" style="left:615.500px;top:258px" width="5" height="3" viewBox="0 0 5 3"><path d="M0.500 2.500L2.500 0.500L4.500 2.500" fill="none" stroke="#555" stroke-width="0.600"/></svg>
<!-- thumbnail panel -->
<div class="a" style="left:155.500px;top:263px;width:7px;height:219.500px;background:#ececec"></div>
<div class="a" style="left:162.500px;top:263px;width:1px;height:219.500px;background:#cfcfcf"></div>
<div class="a" style="left:156px;top:264.500px;width:5.500px;height:5px;background:#fff;border:0.500px solid #b8b8b8"></div>
<svg class="a" style="left:157.300px;top:266.200px" width="3" height="2" viewBox="0 0 3 2"><path d="M0 2L1.500 0.300L3 2Z" fill="#222"/></svg>
<div class="a" style="left:156px;top:270px;width:5.500px;height:31px;background:#fff;border:0.500px solid #b8b8b8"></div>
<div class="a" style="left:156px;top:475.500px;width:5.500px;height:5.500px;background:#fff;border:0.500px solid #b8b8b8"></div>
<svg class="a" style="left:157.300px;top:477.500px" width="3" height="2" viewBox="0 0 3 2"><path d="M0 0L1.500 1.700L3 0Z" fill="#222"/></svg>
<div class="pt" style="left:82.500px;top:267.500px;font-size:6.300px;color:#666;-webkit-text-stroke:0">1</div>
<div class="pt" style="left:82.500px;top:318.500px;font-size:6.300px;color:#c5532f;-webkit-text-stroke:0">2</div>
<div class="pt" style="left:82.500px;top:369.500px;font-size:6.300px;color:#666;-webkit-text-stroke:0">3</div>
<div class="pt" style="left:82.500px;top:420.500px;font-size:6.300px;color:#666;-webkit-text-stroke:0">4</div>
<div class="pt" style="left:82.500px;top:469.500px;font-size:6.300px;color:#666;-webkit-text-stroke:0">5</div>
<!-- thumb1 -->
<div class="a th" style="left:92px;top:270px;width:56.500px;height:43px;background:#fff">
 <div class="tt" style="left:6px;top:3.600px;width:45px;color:#2a32b4;font-weight:bold;text-align:center;white-space:normal;font-size:2.300px;line-height:3px;-webkit-text-stroke:0.150px #2a32b4">Центральноукраїнський державний університет імені Володимира Винниченка</div>
 <div class="tt" style="left:8px;top:11.700px;width:41px;color:#111;font-weight:bold;text-align:center;white-space:normal;font-size:2px;line-height:2.800px;-webkit-text-stroke:0.120px #111">Запрошуємо на наукову школу<br>формування вчителя-вченого<br><i>пам’яті академіка Атаманчука П.С.</i></div>
 <div class="a" style="left:1.700px;top:23.500px;width:10.100px;height:12.300px;background:#7a726c;border-radius:1.500px"></div>
 <div class="a" style="left:4.500px;top:24.800px;width:4.500px;height:5.200px;border-radius:50%;background:#dcc0b0"></div>
 <div class="a" style="left:2.500px;top:30.500px;width:8.500px;height:5.300px;border-radius:3px 3px 0 0;background:#3a3838"></div>
 <div class="a" style="left:5.900px;top:30px;width:1.800px;height:5.800px;background:#e8e8e8"></div>
 <div class="a" style="left:43.500px;top:22.400px;width:10.700px;height:13.400px;background:#dcd4cc;border-radius:1.500px"></div>
 <div class="a" style="left:45.500px;top:23.300px;width:6.600px;height:8.500px;border-radius:50%;background:#4a2c20"></div>
 <div class="a" style="left:47.200px;top:24.800px;width:3.200px;height:4px;border-radius:50%;background:#e0b8a0"></div>
 <div class="a" style="left:44.800px;top:30px;width:8px;height:5.800px;border-radius:3px 3px 0 0;background:#242024"></div>
 <div class="tt" style="left:1.500px;top:36.300px;width:19px;color:#333;white-space:normal;font-size:1.300px;line-height:1.650px"><b>Микола Ілліч Садовий</b>, доктор педагогічних наук, професор, завідувач кафедри</div>
 <div class="tt" style="left:36px;top:36.300px;width:19px;color:#333;white-space:normal;font-size:1.300px;line-height:1.650px"><b>Оксана Трифонова</b>, доктор педагогічних наук, професор кафедри природничих наук</div>
</div>
<!-- thumb2 is added after the slide (clone) -->
<div class="a" style="left:90.500px;top:319.500px;width:59px;height:45px;background:#fff;border:1.300px solid #c5532f"></div>
<!-- thumb3 -->
<div class="a th" style="left:92px;top:372px;width:56.500px;height:42px;background:#fff">
 <div class="tt j" style="left:3.500px;top:2.500px;width:49.500px;color:#3a3a3a"><span style="color:#c03030;font-weight:bold">&nbsp;&nbsp;&nbsp;&nbsp;&nbsp;Провідні ідеї його наукового пошуку:</span> Петро Сергійович заснував наукову школу та започаткував <b>науковий напрям</b> для сучасної дидактики фізики: управління навчально-пізнавальною діяльністю учнів і студентів у навчанні фізики. Результати досліджень школи знайшли відображення у понад 30 монографіях, навчальних посібниках з грифом Міністерства освіти і науки, у численних статтях у фахових виданнях України та зарубіжжя, у матеріалах міжнародних і всеукраїнських конференцій. Під його керівництвом підготовлено і <b>захищено докторські та кандидатські дисертації, створено</b> наукову лабораторію.</div>
 <div class="tt j" style="left:3.500px;top:25.700px;width:49.500px;color:#111;font-weight:bold">&nbsp;&nbsp;&nbsp;– науковий пошук у контексті проблеми управління пізнавальною діяльністю та формування компетентностей і світогляду майбутніх учителів фізики і технологій;<br>&nbsp;&nbsp;&nbsp;– технології особистісно орієнтованого навчання фізики та еталонні вимірники якості знань, бінарні цілеорієнтації та об'єктивний контроль результатів навчання фізики у школі й закладах вищої освіти.</div>
</div>
<!-- thumb4 -->
<div class="a th" style="left:92px;top:422px;width:56.500px;height:42px;background:#fff">
 <div class="tt j" style="left:3.500px;top:2.500px;width:49.500px;color:#3a3a3a"><span style="color:#c03030;font-weight:bold">&nbsp;&nbsp;&nbsp;&nbsp;&nbsp;Другий провідник Міхал Балудянськи</span> <b>не лише як</b> наставник, але як науковець, що був одним з перших ректорів, зробив вагомий внесок у розвиток освіти й науки. Його ідеї про взаємозв'язок наукового пошуку та навчання стали <b>методологічною основою</b> діяльності Академічного товариства, яке об'єднує науковців з багатьох країн Європи. Завдяки цій співпраці відбувається обмін досвідом, проводяться спільні конференції, видаються збірники наукових праць та монографії, стажуються викладачі, реалізуються міжнародні освітні проєкти та ініціативи.</div>
 <div class="tt j" style="left:3.500px;top:25.700px;width:49.500px;color:#111;font-weight:bold">&nbsp;&nbsp;&nbsp;&nbsp;Вітчизняна наукова школа дидактики фізики під керівництвом професора Атаманчука П.С. стала знаним в Україні та Європі науковим центром підготовки учителів фізики, де сформувався потужний колектив однодумців, діяльність якого спрямована на розвиток освіти й науки; було здобуто визнання і повагу наукової спільноти.</div>
</div>
<!-- thumb5 -->
<div class="a" style="left:92px;top:472.500px;width:56.500px;height:10px;background:#fff;overflow:hidden">
 <div class="a" style="left:0.500px;top:0.500px;width:27px;height:9.500px;background:#2a34d8"></div>
 <div class="tt j" style="left:1.500px;top:1px;width:25px;color:#d0d4ff;font-weight:bold">Наукова школа Атаманчука Петра Сергійовича управління навчально пізнавальною діяльністю у навчанні фізики дидактика</div>
 <div class="tt" style="left:30px;top:1px;width:24px;color:#222;font-weight:bold;text-align:center;white-space:normal;line-height:2.600px">Всеукраїнська наукова школа управління результатами навчання</div>
 <div class="a" style="left:30px;top:8.800px;width:24px;height:0.800px;background:#2a34d8"></div>
</div>

<!-- main slide -->
<div class="a" style="left:261px;top:266.400px;width:260px;height:195.200px;background:#fff">
<div class="sl">
<div class="ln in">Творча життєва траєкторія життя</div>
<div class="ln">доктора педагогічних наук, професора,</div>
<div class="ln">академіка АНВО України Петра</div>
<div class="ln">Сергійовича Атаманчука завжди <span class="rd">вражала</span></div>
<div class="ln rd">науковістю, перспективністю ідей й</div>
<div class="ln rd">передбачуваністю майбутнього в галузі</div>
<div class="ln rd la">фізики, методики її навчання, гуманізму.</div>
<div class="ln in">Він одержав визнання не лише в</div>
<div class="ln">Україні, а й за її межами, зокрема був</div>
<div class="ln">обраний віце-президентом Академічного</div>
<div class="ln">товариства Міхала <span class="wv">Балудянського</span></div>
<div class="ln la">(Словаччина).</div>
<div class="ln in">Більше 35 років завідування</div>
<div class="ln">кафедрою методики викладання фізики і</div>
<div class="ln">дисциплін технологічної освітньої галузі</div>
<div class="ln">Кам’янець-Подільського національного</div>
<div class="ln">університету імені Івана Огієнка є епохою</div>
<div class="ln la">неперервного зростання, розвитку.</div>
<svg class="ph" width="79.500" height="102.500" viewBox="0 0 79.500 102.500">
 <defs><radialGradient id="pg" cx="35%" cy="38%" r="80%"><stop offset="0" stop-color="#b0a297"/><stop offset=".45" stop-color="#8f7f74"/><stop offset="1" stop-color="#5a4a42"/></radialGradient></defs>
 <rect width="79.500" height="102.500" fill="url(#pg)"/>
 <g filter="url(#b2)"><ellipse cx="66" cy="22" rx="10" ry="18" fill="#7a6a60" opacity=".6"/>
 <ellipse cx="8" cy="42" rx="7" ry="12" fill="#b8aca0" opacity=".5"/></g>
 <g filter="url(#b3)">
 <path d="M-2 104V65Q6 59 22 55L30 52L58 46Q66 48 72 53Q80 58 82 63V104Z" fill="#5a574f"/>
 <path d="M24 58L30 50L52 52L56 56L40 78L22 104H14Z" fill="#eceae6"/>
 <path d="M32 58L39 58L40 63L29 88L21 104H14L19 90L30 66Z" fill="#8e8e96"/>
 <path d="M33 62L37 62L30 78L23 94L25 84Z" fill="#a8a8b0"/>
 <path d="M23 55L28 54L26 72L14 104H-2V66Z" fill="#524f48"/>
 <path d="M22 57L27 55L25 70L17 90Z" fill="#3e3c36"/>
 <path d="M58 47L52 52L50 62L26 104H82V62Z" fill="#5c5951"/>
 <path d="M57 48L53 54L52 62L56 66L28 104H24L50 62L52 52Z" fill="#3a3832"/>
 <ellipse cx="42" cy="30" rx="18" ry="24.500" fill="#c9a48e" transform="rotate(-4 42 30)"/>
 <ellipse cx="40" cy="14" rx="14" ry="8" fill="#e2c9b8"/>
 <ellipse cx="36" cy="20" rx="9" ry="5" fill="#d8b8a4"/>
 <path d="M55 9Q62 14 61 30L57 34Q58 20 52 10Z" fill="#dcd8d4"/>
 <path d="M25 22Q25 12 30 8Q26 16 27 28Z" fill="#cfc6bf"/>
 <ellipse cx="59.500" cy="33" rx="2.200" ry="4.500" fill="#b88670"/>
 <path d="M26 26.500Q30 24.500 34.500 26.500M40.500 26Q45 24 49.500 26.500" stroke="#5c4438" stroke-width="1.300" fill="none"/>
 <ellipse cx="30.500" cy="29" rx="3" ry="1.500" fill="#6a5044"/><ellipse cx="45" cy="29" rx="3" ry="1.500" fill="#6a5044"/>
 <path d="M37 30Q35.500 37 34 39Q37 41 40.500 39" stroke="#a87c68" stroke-width="1.100" fill="none"/>
 <path d="M32 45Q38 47 45.500 44.500" stroke="#8c5a4c" stroke-width="1.200" fill="none"/>
 <path d="M27 40Q28 52 38 55.500Q50 54 55 42Q55 50 48 56Q40 59.500 32 56Q27 50 27 40Z" fill="#bc947e"/>
 <path d="M54 24Q60 34 54 48Q50 54 46 55Q56 46 54 24Z" fill="#b48c78" opacity=".7"/>
 </g>
</svg>
</div>
</div>
<!-- thumb2 clone -->
<div class="a" style="left:92px;top:321px;width:56.500px;height:42.400px;overflow:hidden;background:#fff"><div style="position:absolute;left:0;top:0;width:260px;height:195px;transform:scale(0.2173);transform-origin:0 0">
<div class="sl">
<div class="ln in">Творча життєва траєкторія життя</div>
<div class="ln">доктора педагогічних наук, професора,</div>
<div class="ln">академіка АНВО України Петра</div>
<div class="ln">Сергійовича Атаманчука завжди <span class="rd">вражала</span></div>
<div class="ln rd">науковістю, перспективністю ідей й</div>
<div class="ln rd">передбачуваністю майбутнього в галузі</div>
<div class="ln rd la">фізики, методики її навчання, гуманізму.</div>
<div class="ln in">Він одержав визнання не лише в</div>
<div class="ln">Україні, а й за її межами, зокрема був</div>
<div class="ln">обраний віце-президентом Академічного</div>
<div class="ln">товариства Міхала <span class="wv">Балудянського</span></div>
<div class="ln la">(Словаччина).</div>
<div class="ln in">Більше 35 років завідування</div>
<div class="ln">кафедрою методики викладання фізики і</div>
<div class="ln">дисциплін технологічної освітньої галузі</div>
<div class="ln">Кам’янець-Подільського національного</div>
<div class="ln">університету імені Івана Огієнка є епохою</div>
<div class="ln la">неперервного зростання, розвитку.</div>
<svg class="ph" width="79.500" height="102.500" viewBox="0 0 79.500 102.500">
 <defs><radialGradient id="pg2" cx="35%" cy="38%" r="80%"><stop offset="0" stop-color="#b0a297"/><stop offset=".45" stop-color="#8f7f74"/><stop offset="1" stop-color="#5a4a42"/></radialGradient></defs>
 <rect width="79.500" height="102.500" fill="url(#pg2)"/>
 <g filter="url(#b2)"><ellipse cx="66" cy="22" rx="10" ry="18" fill="#7a6a60" opacity=".6"/>
 <ellipse cx="8" cy="42" rx="7" ry="12" fill="#b8aca0" opacity=".5"/></g>
 <g filter="url(#b3)">
 <path d="M-2 104V65Q6 59 22 55L30 52L58 46Q66 48 72 53Q80 58 82 63V104Z" fill="#5a574f"/>
 <path d="M24 58L30 50L52 52L56 56L40 78L22 104H14Z" fill="#eceae6"/>
 <path d="M32 58L39 58L40 63L29 88L21 104H14L19 90L30 66Z" fill="#8e8e96"/>
 <path d="M33 62L37 62L30 78L23 94L25 84Z" fill="#a8a8b0"/>
 <path d="M23 55L28 54L26 72L14 104H-2V66Z" fill="#524f48"/>
 <path d="M22 57L27 55L25 70L17 90Z" fill="#3e3c36"/>
 <path d="M58 47L52 52L50 62L26 104H82V62Z" fill="#5c5951"/>
 <path d="M57 48L53 54L52 62L56 66L28 104H24L50 62L52 52Z" fill="#3a3832"/>
 <ellipse cx="42" cy="30" rx="18" ry="24.500" fill="#c9a48e" transform="rotate(-4 42 30)"/>
 <ellipse cx="40" cy="14" rx="14" ry="8" fill="#e2c9b8"/>
 <ellipse cx="36" cy="20" rx="9" ry="5" fill="#d8b8a4"/>
 <path d="M55 9Q62 14 61 30L57 34Q58 20 52 10Z" fill="#dcd8d4"/>
 <path d="M25 22Q25 12 30 8Q26 16 27 28Z" fill="#cfc6bf"/>
 <ellipse cx="59.500" cy="33" rx="2.200" ry="4.500" fill="#b88670"/>
 <path d="M26 26.500Q30 24.500 34.500 26.500M40.500 26Q45 24 49.500 26.500" stroke="#5c4438" stroke-width="1.300" fill="none"/>
 <ellipse cx="30.500" cy="29" rx="3" ry="1.500" fill="#6a5044"/><ellipse cx="45" cy="29" rx="3" ry="1.500" fill="#6a5044"/>
 <path d="M37 30Q35.500 37 34 39Q37 41 40.500 39" stroke="#a87c68" stroke-width="1.100" fill="none"/>
 <path d="M32 45Q38 47 45.500 44.500" stroke="#8c5a4c" stroke-width="1.200" fill="none"/>
 <path d="M27 40Q28 52 38 55.500Q50 54 55 42Q55 50 48 56Q40 59.500 32 56Q27 50 27 40Z" fill="#bc947e"/>
 <path d="M54 24Q60 34 54 48Q50 54 46 55Q56 46 54 24Z" fill="#b48c78" opacity=".7"/>
 </g>
</svg>
</div>
</div></div>
<!-- right scrollbar -->
<div class="a" style="left:616.500px;top:263px;width:6.500px;height:206.500px;background:#ececec"></div>
<div class="a" style="left:617px;top:264.500px;width:5.500px;height:5px;background:#fff;border:0.500px solid #b8b8b8"></div>
<svg class="a" style="left:618.300px;top:266.200px" width="3" height="2" viewBox="0 0 3 2"><path d="M0 2L1.500 0.300L3 2Z" fill="#222"/></svg>
<div class="a" style="left:617px;top:274.500px;width:5.500px;height:8.500px;background:#fff;border:0.500px solid #b8b8b8"></div>
<div class="a" style="left:617px;top:439.500px;width:5.500px;height:5px;background:#fff;border:0.500px solid #b8b8b8"></div>
<svg class="a" style="left:618.300px;top:441.300px" width="3" height="2" viewBox="0 0 3 2"><path d="M0 0L1.500 1.700L3 0Z" fill="#222"/></svg>
<svg class="a" style="left:618px;top:447px" width="4" height="14" viewBox="0 0 4 14"><path d="M0.300 3.500L2 1L3.700 3.500ZM0.300 5.500L2 3L3.700 5.500Z" fill="#444"/><path d="M0.300 8.500L2 11L3.700 8.500ZM0.300 10.500L2 13L3.700 10.500Z" fill="#444"/></svg>
<!-- notes -->
<div class="a" style="left:163.500px;top:469px;width:459.500px;height:0.800px;background:#cfcfcf"></div>
<div class="a" style="left:163.500px;top:469.800px;width:453px;height:12.700px;background:#e6e6e6"></div>
<div class="pt" style="left:168.500px;top:471.500px;font-size:6.600px;line-height:8px;color:#7a7a7a"><span class="sx" style="--k:0.907" id="notes">Щелкните, чтобы добавить заметки</span></div>
<!-- status bar -->
<div class="pt" style="left:82.300px;top:483.300px;color:#444"><span class="sx" style="--k:0.857" id="s1">Слайд 2 из 28</span></div>
<svg class="a" style="left:118px;top:484px" width="7" height="6" viewBox="0 0 7 6"><rect x="0.500" y="0.500" width="4.500" height="4.500" fill="none" stroke="#666" stroke-width="0.500"/><path d="M1.500 2H4M1.500 3.300H4M5.500 1V5.500H2" fill="none" stroke="#666" stroke-width="0.500"/></svg>
<div class="pt" style="left:131.300px;top:483.300px;color:#444"><span class="sx" style="--k:0.901" id="s2">русский</span></div>
<svg class="a" style="left:153.500px;top:483.500px" width="7" height="7" viewBox="0 0 7 7"><circle cx="2.500" cy="1.300" r="0.900" fill="#333"/><path d="M0.800 2.800H4.200M2.500 2.800V4.500M2.500 4.500L1.300 6.500M2.500 4.500L3.700 6.500" stroke="#333" stroke-width="0.600" fill="none"/><circle cx="5" cy="5" r="1.400" fill="none" stroke="#333" stroke-width="0.500"/></svg>
<div class="pt" style="left:162px;top:483.300px;color:#222;font-weight:bold"><span class="sx" style="--k:0.864" id="s3">Специальные возможности: проверьте рекомендации</span></div>
<svg class="a" style="left:404px;top:484px" width="6" height="6" viewBox="0 0 6 6"><path d="M0.500 4.500H5.500M1.500 3.500L3 1L4.500 3.500Z" fill="none" stroke="#555" stroke-width="0.600"/></svg>
<div class="pt" style="left:411.300px;top:483.300px;color:#444"><span class="sx" style="--k:0.895" id="s4">Заметки</span></div>
<svg class="a" style="left:437.500px;top:484px" width="6" height="6" viewBox="0 0 6 6"><path d="M0.500 0.500H5.500V4H2.500L1.200 5.300V4H0.500Z" fill="#444"/></svg>
<div class="pt" style="left:444.500px;top:483.300px;color:#444"><span class="sx" style="--k:0.916" id="s5">Примечания</span></div>
<div class="a" style="left:479.500px;top:482.500px;width:14.700px;height:8.500px;background:#c8c8c8"></div>
<svg class="a" style="left:483px;top:483.500px" width="60" height="7" viewBox="0 0 60 7">
 <g fill="none" stroke="#777" stroke-width="0.600"><rect x="0.800" y="1" width="5.500" height="4.500"/><path d="M2.500 1V5.500M0.800 2.500H2.500"/>
 <rect x="16.500" y="1" width="2" height="1.800"/><rect x="19.500" y="1" width="2" height="1.800"/><rect x="16.500" y="3.800" width="2" height="1.800"/><rect x="19.500" y="3.800" width="2" height="1.800"/>
 <path d="M32 1.500Q33.500 0.800 35 1.500V5.500Q33.500 4.800 32 5.500ZM35 1.500Q36.500 0.800 38 1.500V5.500Q36.500 4.800 35 5.500Z"/>
 <path d="M47.500 1H54.500M48.500 1V3.500H53.500V1M51 3.500V5M49.500 6H52.500"/></g>
</svg>
<div class="a" style="left:545.500px;top:486.500px;width:3px;height:0.600px;background:#555"></div>
<div class="a" style="left:552px;top:486.500px;width:38.500px;height:0.600px;background:#777"></div>
<div class="a" style="left:571px;top:485.500px;width:0.600px;height:2.500px;background:#777"></div>
<div class="a" style="left:563.200px;top:484px;width:1.500px;height:5.500px;background:#444"></div>
<svg class="a" style="left:592.500px;top:485px" width="4" height="4" viewBox="0 0 4 4"><path d="M0.300 2H3.700M2 0.300V3.700" stroke="#555" stroke-width="0.600"/></svg>
<div class="pt" style="left:601px;top:483.300px;color:#444"><span class="sx" style="--k:0.830" id="s6">68 %</span></div>
<svg class="a" style="left:615px;top:483.700px" width="6" height="6" viewBox="0 0 6 6"><rect x="0.500" y="0.500" width="5" height="5" fill="none" stroke="#555" stroke-width="0.600"/><path d="M1.500 2.500V1.500H2.500M4.500 3.500V4.500H3.500M3.500 1.500H4.500V2.500M2.500 4.500H1.500V3.500" fill="none" stroke="#555" stroke-width="0.500"/></svg>
<!-- cursor -->
<svg class="a" style="left:543.500px;top:451.500px" width="6" height="9" viewBox="0 0 6 9"><path d="M0.500 0.500V7L2 5.600L3.200 8.300L4.200 7.900L3 5.300H5Z" fill="#fff" stroke="#222" stroke-width="0.600"/></svg>

<!-- bottom bar -->
<div class="a" id="clock" style="left:13.700px;top:509.600px;font-size:9.300px;line-height:13px;font-weight:bold;color:#fff;letter-spacing:-0.100px"><span class="sx" style="--k:0.825" id="b1t">12:19</span></div>
<div class="a" style="left:38.800px;top:512px;width:0.900px;height:8.200px;background:#9a9da1"></div>
<div class="a" style="left:46.600px;top:509.600px;font-size:9.300px;line-height:13px;font-weight:bold;color:#fff;letter-spacing:-0.100px"><span class="sx" style="--k:1.002" id="b2t">kwb-hfng-eiz</span></div>
<!-- mic group -->
<div class="a" style="left:196px;top:503px;width:48px;height:26px;border-radius:6.500px;background:#601410"></div>
<div class="a" style="left:218px;top:503px;width:26px;height:26px;border-radius:6.500px;background:#f9dedc"></div>
<svg class="a" style="left:203.500px;top:513.500px" width="8" height="5" viewBox="0 0 8 5"><path d="M1 4L4 1L7 4" fill="none" stroke="#fff" stroke-width="1.300"/></svg>
<svg class="a" style="left:224px;top:509px" width="14" height="14" viewBox="0 0 14 14"><rect x="5.600" y="1.800" width="2.800" height="6" rx="1.400" fill="#601410"/><path d="M3.600 6.500A3.400 3.400 0 0 0 10.400 6.500M7 10V12" fill="none" stroke="#601410" stroke-width="1"/><path d="M2.500 1.500L11.500 12" stroke="#601410" stroke-width="1"/><path d="M3.300 1L12.300 11.500" stroke="#f9dedc" stroke-width="0.800"/></svg>
<!-- camera group -->
<div class="a" style="left:249px;top:503px;width:47.500px;height:26px;border-radius:13px;background:#28292c"></div>
<div class="a" style="left:270.500px;top:503px;width:26px;height:26px;border-radius:13px;background:#333537"></div>
<svg class="a" style="left:257px;top:513.500px" width="8" height="5" viewBox="0 0 8 5"><path d="M1 4L4 1L7 4" fill="none" stroke="#c4c7c5" stroke-width="1.100"/></svg>
<svg class="a" style="left:277.500px;top:510.500px" width="13" height="11" viewBox="0 0 13 11"><rect x="0.800" y="1.300" width="7.400" height="8.400" rx="1" fill="none" stroke="#e3e3e3" stroke-width="1.300"/><path d="M8.800 4.200L12 1.800V9.200L8.800 6.800Z" fill="#e3e3e3"/></svg>
<!-- share -->
<div class="btn" style="left:301px;width:30.500px"></div>
<svg class="a" style="left:309.500px;top:509.500px" width="13" height="13" viewBox="0 0 13 13"><rect x="1.300" y="1.600" width="10.400" height="7.200" rx="0.800" fill="none" stroke="#e3e3e3" stroke-width="1.200"/><path d="M0.300 11H12.700" stroke="#e3e3e3" stroke-width="1.200"/><path d="M6.500 3.200L9 5.600H7.300V7.400H5.700V5.600H4Z" fill="#e3e3e3"/></svg>
<!-- emoji -->
<div class="btn" style="left:335.700px;width:30.500px"></div>
<svg class="a" style="left:344.500px;top:509.500px" width="13" height="13" viewBox="0 0 13 13"><circle cx="6.500" cy="6.500" r="5" fill="none" stroke="#e3e3e3" stroke-width="1.200"/><circle cx="4.700" cy="5.200" r="0.800" fill="#e3e3e3"/><circle cx="8.300" cy="5.200" r="0.800" fill="#e3e3e3"/><path d="M3.800 7.300H9.200A2.700 2.700 0 0 1 3.800 7.300Z" fill="#e3e3e3"/></svg>
<!-- cc -->
<div class="btn" style="left:370.600px;width:30.500px"></div>
<svg class="a" style="left:379.500px;top:510.500px" width="13" height="11" viewBox="0 0 13 11"><rect x="1" y="1" width="11" height="9" rx="1" fill="none" stroke="#e3e3e3" stroke-width="1.200"/><path d="M5.600 4.500H3.500V6.500H5.600M9.600 4.500H7.500V6.500H9.600" fill="none" stroke="#e3e3e3" stroke-width="0.900"/></svg>
<!-- hand -->
<div class="btn" style="left:405.700px;width:30.500px"></div>
<svg class="a" style="left:414.500px;top:509px" width="13" height="14" viewBox="0 0 13 14"><path d="M3.200 7.500V3.200M5.200 6.500V1.800M7.200 6.500V1.500M9.200 6.800V2.600" stroke="#e3e3e3" stroke-width="1.600" stroke-linecap="round" fill="none"/><path d="M2.600 7V9.500Q3 13 6.500 13Q9.800 13 9.800 9.500V6.500H2.600M2.800 10L1 7.200" fill="none" stroke="#e3e3e3" stroke-width="1.400" stroke-linecap="round"/></svg>
<!-- more -->
<div class="btn" style="left:440.500px;width:20.300px"></div>
<div class="a" style="left:449.400px;top:510.300px;width:2.500px;height:2.500px;border-radius:50%;background:#e3e3e3;box-shadow:0 4.200px #e3e3e3,0 8.400px #e3e3e3"></div>
<!-- hangup -->
<div class="a" style="left:465px;top:503px;width:39.500px;height:26px;border-radius:13px;background:#dc362e"></div>
<svg class="a" style="left:477.700px;top:512.600px" width="14" height="7.200" viewBox="0 0 16 8.200"><path d="M1 5.800Q1 3.800 3 2.800Q8 0.600 13 2.800Q15 3.800 15 5.800L14.600 7.200Q14.300 7.900 13.500 7.700L11.200 7Q10.600 6.800 10.600 6.100V4.900Q8 4.100 5.400 4.900V6.100Q5.400 6.800 4.800 7L2.500 7.700Q1.700 7.900 1.400 7.200Z" fill="#fff"/></svg>
<!-- right icons -->
<svg class="a" style="left:594.500px;top:509px" width="14" height="14" viewBox="0 0 14 14"><circle cx="7" cy="7" r="5.300" fill="none" stroke="#fff" stroke-width="1.300"/><rect x="6.300" y="6.200" width="1.400" height="3.800" fill="#fff"/><rect x="6.300" y="3.900" width="1.400" height="1.400" fill="#fff"/></svg>
<svg class="a" style="left:620px;top:510px" width="15" height="12" viewBox="0 0 15 12"><circle cx="5.500" cy="3.300" r="2" fill="none" stroke="#fff" stroke-width="1.300"/><path d="M1.200 10.300V9.300Q1.200 7.300 5.500 7.300Q9.800 7.300 9.800 9.300V10.300Z" fill="none" stroke="#fff" stroke-width="1.300"/><path d="M9.500 1.400A2 2 0 0 1 9.500 5.200" fill="none" stroke="#fff" stroke-width="1.300"/><path d="M11.300 7.600Q13.600 8.200 13.600 9.500V10.300H11.800" fill="none" stroke="#fff" stroke-width="1.300"/></svg>
<svg class="a" style="left:647px;top:509.500px" width="14" height="13" viewBox="0 0 14 13"><path d="M1.500 1.500H12.500V9.500H4L1.500 12Z" fill="none" stroke="#fff" stroke-width="1.300" stroke-linejoin="round"/><path d="M4 4.500H10M4 6.700H10" stroke="#fff" stroke-width="1.100"/></svg>
<svg class="a" style="left:675px;top:511px" width="11" height="11" viewBox="0 0 11 11"><g fill="#fff"><circle cx="1.700" cy="1.700" r="1.250"/><circle cx="5.500" cy="1.700" r="1.250"/><circle cx="9.300" cy="1.700" r="1.250"/><circle cx="1.700" cy="5.500" r="1.250"/><circle cx="5.500" cy="5.500" r="1.250"/><circle cx="9.300" cy="5.500" r="1.250"/><circle cx="1.700" cy="9.300" r="1.250"/><circle cx="5.500" cy="9.300" r="1.250"/><circle cx="9.300" cy="9.300" r="1.250"/></g></svg>
<div class="a" style="left:628.400px;top:499.300px;width:15.200px;height:8.400px;border-radius:4.200px;background:#5a5d61;color:#d4d6d9;font-size:6px;line-height:8.400px;text-align:center;font-weight:bold">55</div>

</body></html>
